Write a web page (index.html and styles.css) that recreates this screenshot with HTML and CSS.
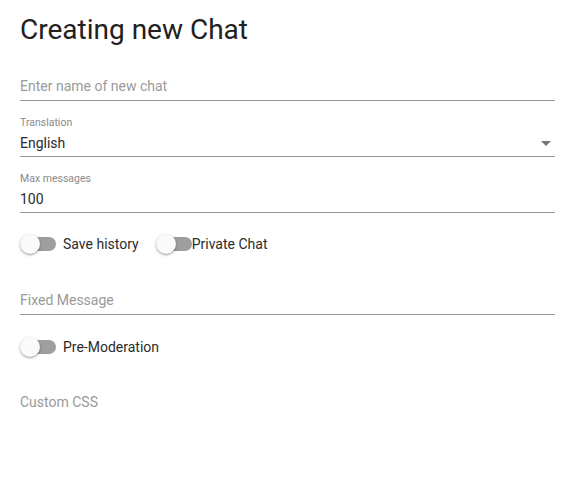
FILE: index.html
```html
<!DOCTYPE html>
<html lang="en">

<head>
	<meta charset="UTF-8">
	<meta name="viewport" content="width=device-width, initial-scale=1.0">
	<link rel="stylesheet" href="styles.css">
	<title>Creating new Chat</title>
</head>

<body>
	<div class="container">
		<h1 class="title">Creating new Chat</h1>

		<div class="field">
			<input class="text-input" type="text" placeholder="Enter name of new chat">
		</div>

		<div class="field">
			<label class="field-label" for="translation">Translation</label>
			<div class="select-box" id="translation">
				<span class="select-value">English</span>
				<svg class="select-arrow" width="10" height="5" viewBox="0 0 10 5">
					<path d="M0 0 L10 0 L5 5 Z" fill="#757575" />
				</svg>
			</div>
		</div>

		<div class="field">
			<label class="field-label" for="max-messages">Max messages</label>
			<input class="text-input value-input" id="max-messages" type="text" value="100">
		</div>

		<div class="switch-row">
			<label class="switch-item">
				<span class="switch"><span class="switch-track"></span><span class="switch-thumb"></span></span>
				<span class="switch-text">Save history</span>
			</label>
			<label class="switch-item switch-item--tight">
				<span class="switch"><span class="switch-track"></span><span class="switch-thumb"></span></span>
				<span class="switch-text">Private Chat</span>
			</label>
		</div>

		<div class="field field--short">
			<input class="text-input" type="text" placeholder="Fixed Message">
		</div>

		<div class="switch-row switch-row--second">
			<label class="switch-item">
				<span class="switch"><span class="switch-track"></span><span class="switch-thumb"></span></span>
				<span class="switch-text">Pre-Moderation</span>
			</label>
		</div>

		<div class="textarea-field">
			<textarea class="text-area" placeholder="Custom CSS"></textarea>
		</div>
	</div>
</body>

</html>
```

FILE: styles.css
```css
* {
	box-sizing: border-box;
}

body {
	margin: 0;
	background: #fff;
	font-family: Roboto, "Liberation Sans", sans-serif;
	color: rgba(0, 0, 0, 0.87);
}

.container {
	width: 555px;
	padding: 0 0 0 20px;
}

.title {
	margin: 0;
	padding-top: 13px;
	height: 45px;
	font-size: 28px;
	font-weight: 400;
	line-height: 34px;
	color: #212121;
}

.field {
	height: 56px;
	display: flex;
	flex-direction: column;
	justify-content: flex-end;
}

.field-label {
	display: block;
	font-size: 10.5px;
	line-height: 12px;
	color: #8a8a8a;
}

.text-input {
	width: 100%;
	height: 29px;
	padding: 0;
	border: none;
	border-bottom: 1px solid #949494;
	outline: none;
	font-family: inherit;
	font-size: 14px;
	color: #2b2b2b;
	background: transparent;
}

.text-input::placeholder,
.text-area::placeholder {
	color: #9a9a9a;
}

.value-input {
	height: 28px;
	padding-top: 1px;
}

.select-box {
	display: flex;
	align-items: center;
	justify-content: space-between;
	height: 28px;
	padding-top: 1px;
	border-bottom: 1px solid #949494;
	font-size: 14px;
	color: #2b2b2b;
}

.select-arrow {
	margin-right: 4px;
}

.switch-row {
	display: flex;
	align-items: center;
	height: 60px;
	padding-top: 1px;
}

.switch-item {
	display: flex;
	align-items: center;
	margin-right: 17px;
	font-size: 14px;
	color: #2b2b2b;
}

.switch {
	position: relative;
	display: inline-block;
	width: 36px;
	height: 20px;
	margin-right: 7px;
}

.switch-item--tight .switch {
	margin-right: 0;
}

.switch-track {
	position: absolute;
	left: 2px;
	top: 3px;
	width: 34px;
	height: 14px;
	border-radius: 7px;
	background: #9e9e9e;
}

.switch-thumb {
	position: absolute;
	left: 0;
	top: 0;
	width: 20px;
	height: 20px;
	border-radius: 50%;
	background: #fafafa;
	box-shadow: 0 1px 3px rgba(0, 0, 0, 0.3), 0 1px 1px rgba(0, 0, 0, 0.14);
}

.field--short {
	height: 42px;
}

.switch-row--second {
	height: 63px;
}

.textarea-field {
	padding-top: 16px;
}

.text-area {
	width: 100%;
	height: 60px;
	padding: 0;
	border: none;
	outline: none;
	resize: none;
	font-family: inherit;
	font-size: 14px;
	background: transparent;
}
```
